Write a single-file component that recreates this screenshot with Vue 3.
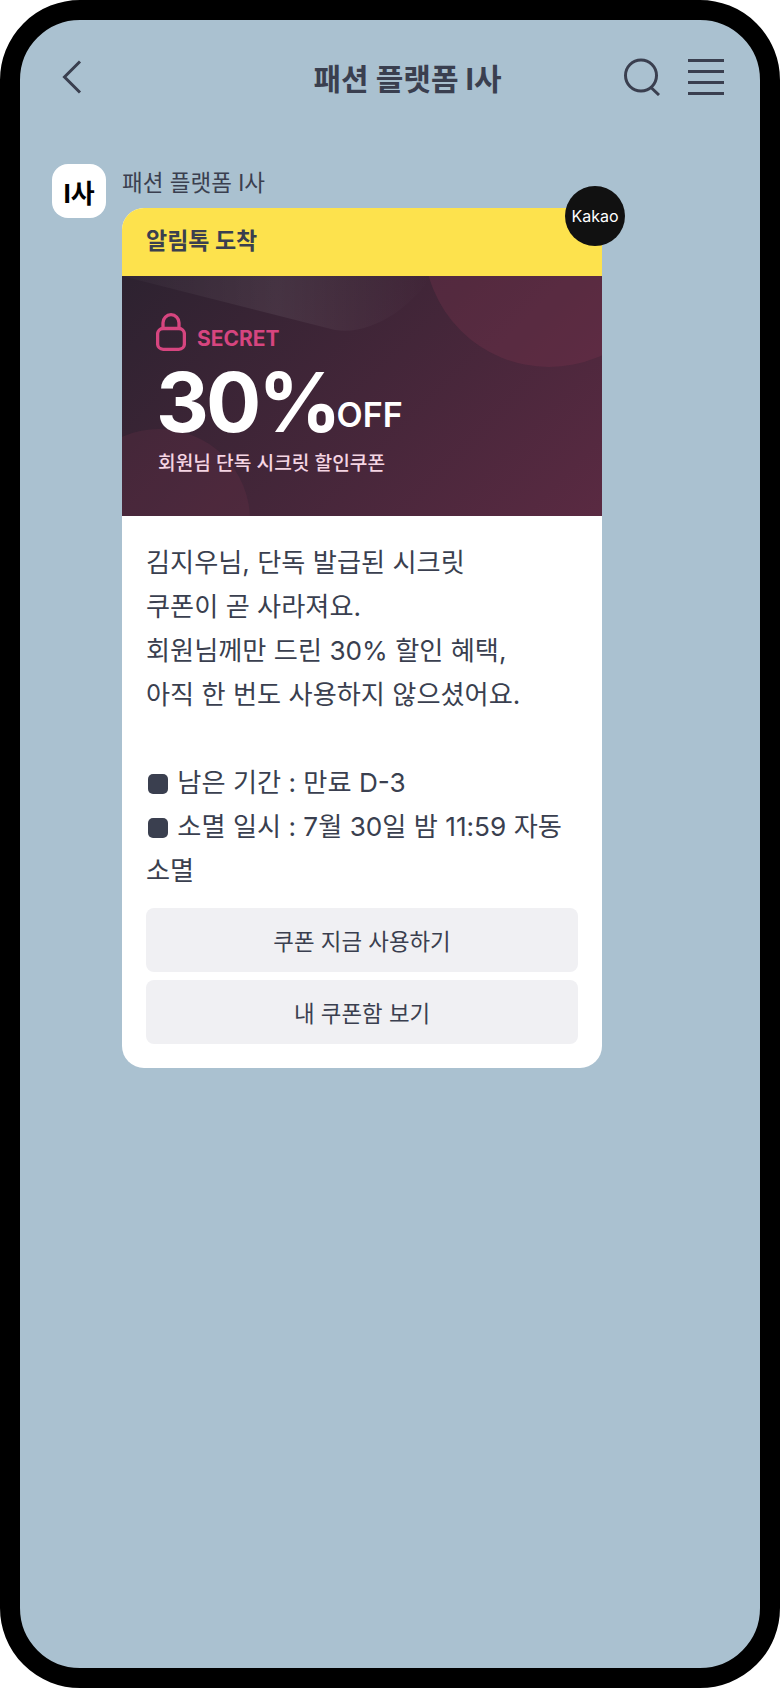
<template><div class="phone">
<div class="screen">
<header class="topbar">
<svg class="back" width="20" height="34" viewBox="0 0 20 34"><path d="M18 1.5 2.5 17 18 32.5" /></svg>
<h1 class="title">패션 플랫폼 I사</h1>
<div class="top-icons">
<svg class="ico" width="38" height="38" viewBox="0 0 38 38"><circle cx="18" cy="17.5" r="15.5" /><path d="M28 29.5 36 37" /></svg>
<svg class="ico" width="36" height="36" viewBox="0 0 36 36"><path d="M0 1.500H36M0 12.500H36M0 23.500H36M0 34.500H36" /></svg>
</div>
</header>
<div class="chat">
<div class="avatar">I사</div>
<div class="msg">
<div class="sender">패션 플랫폼 I사</div>
<div class="card">
<div class="badge">Kakao</div>
<div class="card-head">알림톡 도착</div>
<div class="banner">
<svg class="decor" width="480" height="240" viewBox="0 0 480 240">
<defs><linearGradient id="sheen" x1="0" y1="0" x2="1" y2="0"><stop offset="0" stop-color="#fff" stop-opacity=".02" /><stop offset=".5" stop-color="#fff" stop-opacity=".07" /><stop offset="1" stop-color="#fff" stop-opacity="0" /></linearGradient></defs>
<path d="M0 0 213 54C250 60 290 30 310 0Z" fill="url(#sheen)" />
<circle cx="427" cy="-34" r="125" fill="#7d3550" fill-opacity=".3" />
<circle cx="37" cy="244" r="91" fill="#7d3550" fill-opacity=".2" />
</svg>
<div class="banner-in">
<div class="secret">
<svg width="30" height="38" viewBox="0 0 30 38"><rect x="1.600" y="15.500" width="26.800" height="20.800" rx="5.500" /><path d="M7 15.500V9.700a8 8 0 0 1 16 0V15.500" /></svg>
<span>SECRET</span>
</div>
<div class="off"><span class="pct">30%</span><span class="off-t">OFF</span></div>
<div class="sub">회원님 단독 시크릿 할인쿠폰</div>
</div>
</div>
<div class="body">
<p class="txt">김지우님, 단독 발급된 시크릿<br>쿠폰이 곧 사라져요.<br>회원님께만 드린 30% 할인 혜택,<br>아직 한 번도 사용하지 않으셨어요.<br><br><i class="dot"></i> 남은 기간 : 만료 D-3<br><i class="dot"></i> 소멸 일시 : 7월 30일 밤 11:59 자동 소멸</p>
<div class="btns">
<button class="btn">쿠폰 지금 사용하기</button>
<button class="btn">내 쿠폰함 보기</button>
</div>
</div>
</div>
</div>
</div>
</div>
</div></template>
<script setup>
</script>
<style>
html, body { background: #fff; }
</style>
<style scoped>
.phone { width: 780px; height: 1688px; box-sizing: border-box; border: 20px solid #000; border-radius: 80px; background: #aac1d0; overflow: hidden; font-family: Inter, "Noto Sans CJK KR", sans-serif; color: #3a3f4f; }
.screen { height: 100%; }
.topbar { display: flex; align-items: center; height: 76px; padding: 19px 36px 0 42px; position: relative; }
.back path, .ico path, .ico circle { fill: none; stroke: #3a3f4f; stroke-width: 3; }
.title { flex: 1; margin: 0; font-size: 30px; font-weight: 700; text-align: center; padding-left: 110px; }
.top-icons { display: flex; align-items: center; gap: 27px; }
.chat { display: flex; gap: 16px; padding: 49px 0 0 32px; }
.avatar { width: 54px; height: 54px; background: #fff; border-radius: 16px; display: flex; align-items: center; justify-content: center; font-size: 26px; font-weight: 700; color: #000; }
.sender { font-size: 22.500px; line-height: 38px; margin-bottom: 6px; }
.card { width: 480px; position: relative; background: #fff; border-radius: 22px; }
.badge { position: absolute; right: -23px; top: -22px; width: 60px; height: 60px; border-radius: 50%; background: #111; color: #fff; font-size: 16px; display: flex; align-items: center; justify-content: center; z-index: 2; }
.card-head { height: 68px; padding-left: 24px; background: #fde24d; border-radius: 22px 22px 0 0; font-size: 23px; font-weight: 700; line-height: 67px; }
.banner { height: 240px; position: relative; overflow: hidden; background: linear-gradient(135deg, #2d2230 0%, #5a2a42 100%); }
.decor { position: absolute; left: 0; top: 0; }
.banner-in { position: relative; padding: 37px 0 0 34px; }
.secret { display: flex; align-items: flex-end; gap: 11px; color: #d6457f; font-size: 21px; font-weight: 700; line-height: 25px; }
.secret rect, .secret path { fill: none; stroke: #d6457f; stroke-width: 3.300; }
.off { margin-top: 7px; color: #fff; font-size: 82px; line-height: 90px; white-space: nowrap; }
.pct { font-weight: 700; letter-spacing: -3px; }
.off-t { margin-left: -2px; font-size: 34px; font-weight: 600; line-height: 1; vertical-align: 5px; }
.sub { margin-top: 1px; margin-left: 2px; color: #f5d5e3; font-size: 19.200px; font-weight: 500; line-height: 28px; }
.body { padding: 25px 24px 24px; }
.txt { margin: 0; font-size: 26.200px; line-height: 44px; word-break: keep-all; }
.dot { display: inline-block; width: 20px; height: 20px; margin: 0 2px; border-radius: 5px; background: #3a3f4f; vertical-align: -2px; }
.btns { display: flex; flex-direction: column; gap: 8px; margin-top: 15px; }
.btn { height: 64px; border: 0; border-radius: 8px; background: #f0f0f3; color: #3a3f4f; font: 400 22.400px Inter, "Noto Sans CJK KR", sans-serif; }
</style>
